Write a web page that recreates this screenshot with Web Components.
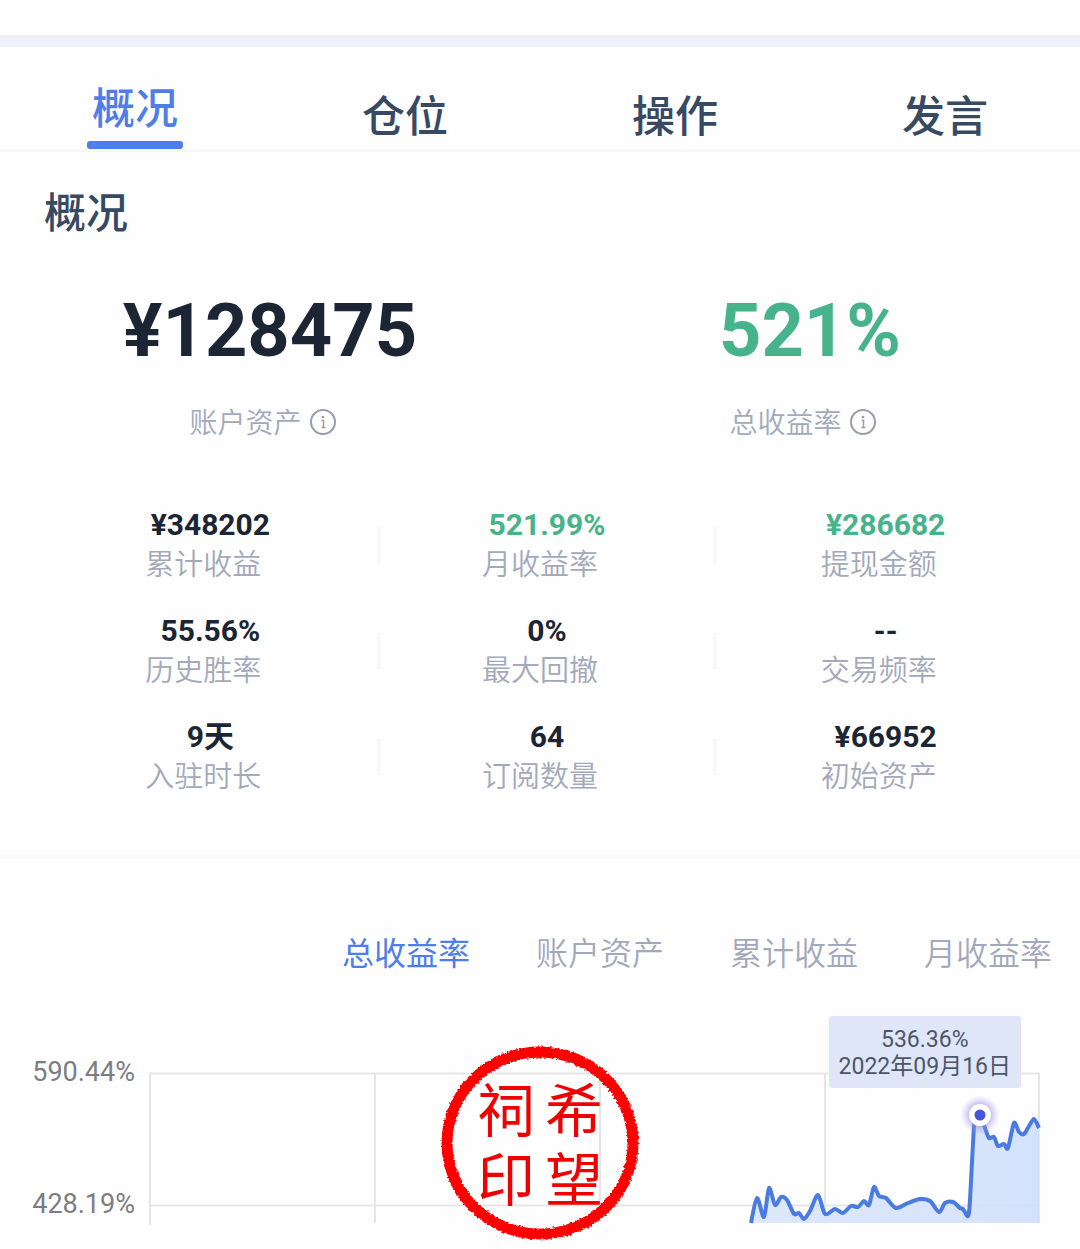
<!DOCTYPE html>
<html lang="zh-CN">
<head>
<meta charset="utf-8">
<meta name="viewport" content="width=device-width, initial-scale=1">
<title>概况</title>
<style>
	body {
		margin: 0;
		background: #fefefe;
		font-family: Roboto, "Noto Sans CJK SC", sans-serif;
		--ink: #1b2534;
		--title: #384962;
		--muted: #a3a9ba;
		--blue: #4f7dea;
		--green: #47b38a;
	}
</style>
</head>
<body>
<account-page></account-page>

<script>
class NavTabs extends HTMLElement {
	constructor() {
		super();

		const shadow = this.attachShadow({ mode: "open" });
		shadow.innerHTML = `
			<style>
				:host {
					display: block;
					border-top: 12px solid #f0f0fa;
					border-bottom: 3px solid #f7f7f8;
				}

				nav {
					display: grid;
					grid-template-columns: repeat(4, 1fr);
					height: 102px;
				}
			</style>
			<nav><slot></slot></nav>
		`;
	}
}

class NavTab extends HTMLElement {
	constructor() {
		super();

		const shadow = this.attachShadow({ mode: "open" });
		shadow.innerHTML = `
			<style>
				:host {
					display: flex;
					justify-content: center;
					align-items: flex-end;
				}

				button {
					border: 0;
					margin: 0;
					padding: 0 0 12px;
					background: none;
					font: 500 43px/48px "Noto Sans CJK SC", sans-serif;
					color: var(--title);
					cursor: pointer;
				}

				:host([active]) button {
					padding-bottom: 0;
					color: var(--blue);
				}

				:host([active]) button::after {
					content: "";
					display: block;
					height: 8px;
					margin: 12px -5px 0;
					border-radius: 3px;
					background: var(--blue);
				}
			</style>
			<button type="button"><slot></slot></button>
		`;
	}
}

class HeroStat extends HTMLElement {
	constructor() {
		super();

		const shadow = this.attachShadow({ mode: "open" });
		shadow.innerHTML = `
			<style>
				:host {
					display: flex;
					flex-direction: column;
					align-items: center;
					gap: 33px;
					color: var(--ink);
				}

				:host([up]) {
					color: var(--green);
				}

				.value {
					font-size: 74px;
					font-weight: 700;
					line-height: 80px;
				}

				.label {
					display: flex;
					align-items: center;
					gap: 8px;
					padding-right: 13px;
					font-size: 28px;
					font-weight: 350;
					line-height: 40px;
					color: var(--muted);
				}

				button {
					display: flex;
					padding: 0;
					border: 0;
					background: none;
					color: #989dab;
				}

				svg {
					overflow: visible;
				}
			</style>
			<div class="value"><slot></slot></div>
			<div class="label">
				<span>${this.getAttribute("label")}</span>
				<button type="button" aria-label="${this.getAttribute("label")}">
					<svg width="28" height="28" viewBox="0 0 28 28" fill="none" stroke="currentColor" stroke-width="2">
						<circle cx="13" cy="12" r="12"/>
						<path d="M11.500 10.500H13.500V17.500M11.500 17.500H15.500" stroke-width="1.500"/>
						<circle cx="13" cy="7" r="1.300" fill="currentColor" stroke="none"/>
					</svg>
				</button>
			</div>
		`;
	}
}

class StatCell extends HTMLElement {
	constructor() {
		super();

		const shadow = this.attachShadow({ mode: "open" });
		shadow.innerHTML = `
			<style>
				:host {
					display: flex;
					align-items: center;
					color: var(--ink);
				}

				:host([up]) {
					color: var(--green);
				}

				:host(:not([last]))::after {
					content: "";
					width: 4px;
					height: 36px;
					background: #f8f8fc;
				}

				.cell {
					flex: 1;
					text-align: center;
				}

				.value {
					font-size: 30px;
					font-weight: 700;
					line-height: 40px;
				}

				.label {
					padding-right: 14px;
					font-size: 29px;
					font-weight: 350;
					line-height: 40px;
					color: var(--muted);
				}
			</style>
			<div class="cell">
				<div class="value"><slot></slot></div>
				<div class="label">${this.getAttribute("label")}</div>
			</div>
		`;
	}
}

class ChartTabs extends HTMLElement {
	constructor() {
		super();

		const labels = this.getAttribute("labels").split(",");
		const shadow = this.attachShadow({ mode: "open" });
		shadow.innerHTML = `
			<style>
				:host {
					display: flex;
					justify-content: flex-end;
					gap: 66px;
					padding: 0 28px;
				}

				button {
					padding: 0;
					border: 0;
					background: none;
					font: 350 32px/48px "Noto Sans CJK SC", sans-serif;
					color: var(--muted);
					white-space: nowrap;
				}

				button[aria-pressed="true"] {
					font-weight: 400;
					color: var(--blue);
				}
			</style>
			${labels
				.map((text, i) => `<button type="button" aria-pressed="${i === 0}">${text}</button>`)
				.join("")}
		`;

		shadow.addEventListener("click", (e) => {
			const clicked = e.target.closest("button");
			if (!clicked) return;
			shadow.querySelectorAll("button").forEach((button) => {
				button.setAttribute("aria-pressed", button === clicked);
			});
		});
	}
}

const POINTS = [
	[602, 158], [608, 133], [615, 152], [620, 123], [626, 140], [632, 132],
	[638, 135], [645, 149], [650, 148], [655, 154], [661, 146], [669, 130],
	[676, 149], [686, 144], [694, 148], [702, 141], [709, 142], [715, 136],
	[720, 140], [725, 122], [730, 131], [737, 133], [747, 143], [759, 138],
	[771, 134], [781, 136], [790, 147], [796, 138], [804, 137], [811, 143],
	[814, 144], [819, 151], [821, 135], [825, 60], [827, 53], [831, 50],
	[836, 63], [840, 73], [845, 72], [849, 81], [855, 79], [859, 83],
	[865, 58], [870, 67], [875, 69], [880, 61], [885, 54], [890, 63],
];

// smooth curve through every point
function curve(points) {
	let d = `M${points[0].join(" ")}`;
	for (let i = 0; i < points.length - 1; i++) {
		const a = points[i - 1] || points[i];
		const b = points[i];
		const c = points[i + 1];
		const e = points[i + 2] || c;
		d += `C${b[0] + (c[0] - a[0]) / 7} ${b[1] + (c[1] - a[1]) / 7}`;
		d += ` ${c[0] - (e[0] - b[0]) / 7} ${c[1] - (e[1] - b[1]) / 7} ${c[0]} ${c[1]}`;
	}
	return d;
}

class YieldChart extends HTMLElement {
	constructor() {
		super();

		const line = curve(POINTS);
		const shadow = this.attachShadow({ mode: "open" });
		shadow.innerHTML = `
			<style>
				:host {
					display: grid;
					grid-template-columns: 135px 1fr;
					column-gap: 14px;
					position: relative;
					padding-right: 39px;
				}

				.axis {
					display: flex;
					flex-direction: column;
					justify-content: space-between;
					height: 164px;
					margin-top: -9px;
					text-align: right;
					font-size: 27px;
					line-height: 32px;
					color: #7c7d82;
				}

				.plot {
					position: relative;
				}

				svg {
					display: block;
					width: 100%;
					overflow: visible;
				}

				.tip {
					position: absolute;
					right: 20px;
					top: -49px;
					box-sizing: border-box;
					padding: 10px 10px 8px;
					border-radius: 3px;
					background: #dfe6f8;
					text-align: center;
					font-size: 23px;
					line-height: 27px;
					white-space: nowrap;
					color: #4b5769;
				}

				::slotted(*) {
					position: absolute;
					left: 50%;
					top: -20px;
					transform: translateX(-50%);
				}
			</style>
			<div class="axis"><span>590.44%</span><span>428.19%</span></div>
			<div class="plot">
				<svg viewBox="0 0 892 164" aria-hidden="true">
					<defs>
						<radialGradient id="glow">
							<stop offset="50%" stop-color="#8f80e0" stop-opacity=".55"/>
							<stop offset="100%" stop-color="#b8aaf0" stop-opacity="0"/>
						</radialGradient>
						<linearGradient id="fill">
							<stop offset="0" stop-color="#dbe6fa"/>
							<stop offset=".75" stop-color="#d4e2fb"/>
							<stop offset="1" stop-color="#cfdffb"/>
						</linearGradient>
					</defs>
					<path d="M0 8.500H891M0 140.500H891M1 8V160M226 8V158M451 8V158M676 8V158M890 8V158" fill="none" stroke="#e5e5e7" stroke-width="2"/>
					<path d="${line}V158H602Z" fill="url(#fill)" fill-opacity=".92"/>
					<path d="${line}" fill="none" stroke="#4a7be2" stroke-width="4" stroke-linejoin="round"/>
					<circle cx="831" cy="50" r="20" fill="url(#glow)"/>
					<circle cx="831" cy="50" r="11" fill="#fff"/>
					<circle cx="831" cy="50" r="5.500" fill="#4656df"/>
				</svg>
				<div class="tip">536.36%<br>2022年09月16日</div>
			</div>
			<slot></slot>
		`;
	}
}

class SealStamp extends HTMLElement {
	constructor() {
		super();

		const shadow = this.attachShadow({ mode: "open" });
		shadow.innerHTML = `
			<style>
				:host {
					display: grid;
					place-items: center;
					width: 200px;
					height: 196px;
					color: #f00000;
				}

				svg,
				.text {
					grid-area: 1 / 1;
				}

				.text {
					display: grid;
					grid-template-columns: 68px 68px;
					padding-top: 8px;
					text-align: center;
					font-size: 58px;
					line-height: 69px;
				}
			</style>
			<svg width="200" height="196" viewBox="0 0 200 196" aria-hidden="true">
				<filter id="rough" x="-5%" y="-5%" width="110%" height="110%">
					<feTurbulence type="fractalNoise" baseFrequency=".4" numOctaves="2" seed="4"/>
					<feDisplacementMap in="SourceGraphic" scale="4" xChannelSelector="R" yChannelSelector="G"/>
				</filter>
				<ellipse cx="100" cy="98" rx="93" ry="91" fill="none" stroke="#fe0000" stroke-width="11" filter="url(#rough)"/>
			</svg>
			<div class="text"><slot></slot></div>
		`;
	}
}

class AccountPage extends HTMLElement {
	constructor() {
		super();

		const shadow = this.attachShadow({ mode: "open" });
		shadow.innerHTML = `
			<style>
				:host {
					display: block;
					padding: 35px 0 20px;
				}

				h1 {
					margin: 38px 44px 53px;
					font-size: 42px;
					font-weight: 500;
					line-height: 48px;
					color: var(--title);
				}

				.hero {
					display: grid;
					grid-template-columns: 1fr 1fr;
				}

				.stats {
					display: grid;
					grid-template-columns: repeat(3, 1fr);
					row-gap: 26px;
					margin: 61px 26px 57px 44px;
				}

				hr {
					height: 5px;
					margin: 0 0 68px;
					border: 0;
					background: #fafafb;
				}

				yield-chart {
					margin-top: 90px;
				}
			</style>
			<nav-tabs>
				<nav-tab active>概况</nav-tab>
				<nav-tab>仓位</nav-tab>
				<nav-tab>操作</nav-tab>
				<nav-tab>发言</nav-tab>
			</nav-tabs>
			<h1>概况</h1>
			<section class="hero">
				<hero-stat label="账户资产">¥128475</hero-stat>
				<hero-stat label="总收益率" up>521%</hero-stat>
			</section>
			<section class="stats">
				<stat-cell label="累计收益">¥348202</stat-cell>
				<stat-cell label="月收益率" up>521.99%</stat-cell>
				<stat-cell label="提现金额" up last>¥286682</stat-cell>
				<stat-cell label="历史胜率">55.56%</stat-cell>
				<stat-cell label="最大回撤">0%</stat-cell>
				<stat-cell label="交易频率" last>--</stat-cell>
				<stat-cell label="入驻时长">9天</stat-cell>
				<stat-cell label="订阅数量">64</stat-cell>
				<stat-cell label="初始资产" last>¥66952</stat-cell>
			</section>
			<hr>
			<chart-tabs labels="总收益率,账户资产,累计收益,月收益率"></chart-tabs>
			<yield-chart>
				<seal-stamp><span>祠</span><span>希</span><span>印</span><span>望</span></seal-stamp>
			</yield-chart>
		`;
	}
}

customElements.define("nav-tabs", NavTabs);
customElements.define("nav-tab", NavTab);
customElements.define("hero-stat", HeroStat);
customElements.define("stat-cell", StatCell);
customElements.define("chart-tabs", ChartTabs);
customElements.define("yield-chart", YieldChart);
customElements.define("seal-stamp", SealStamp);
customElements.define("account-page", AccountPage);
</script>
</body>
</html>
